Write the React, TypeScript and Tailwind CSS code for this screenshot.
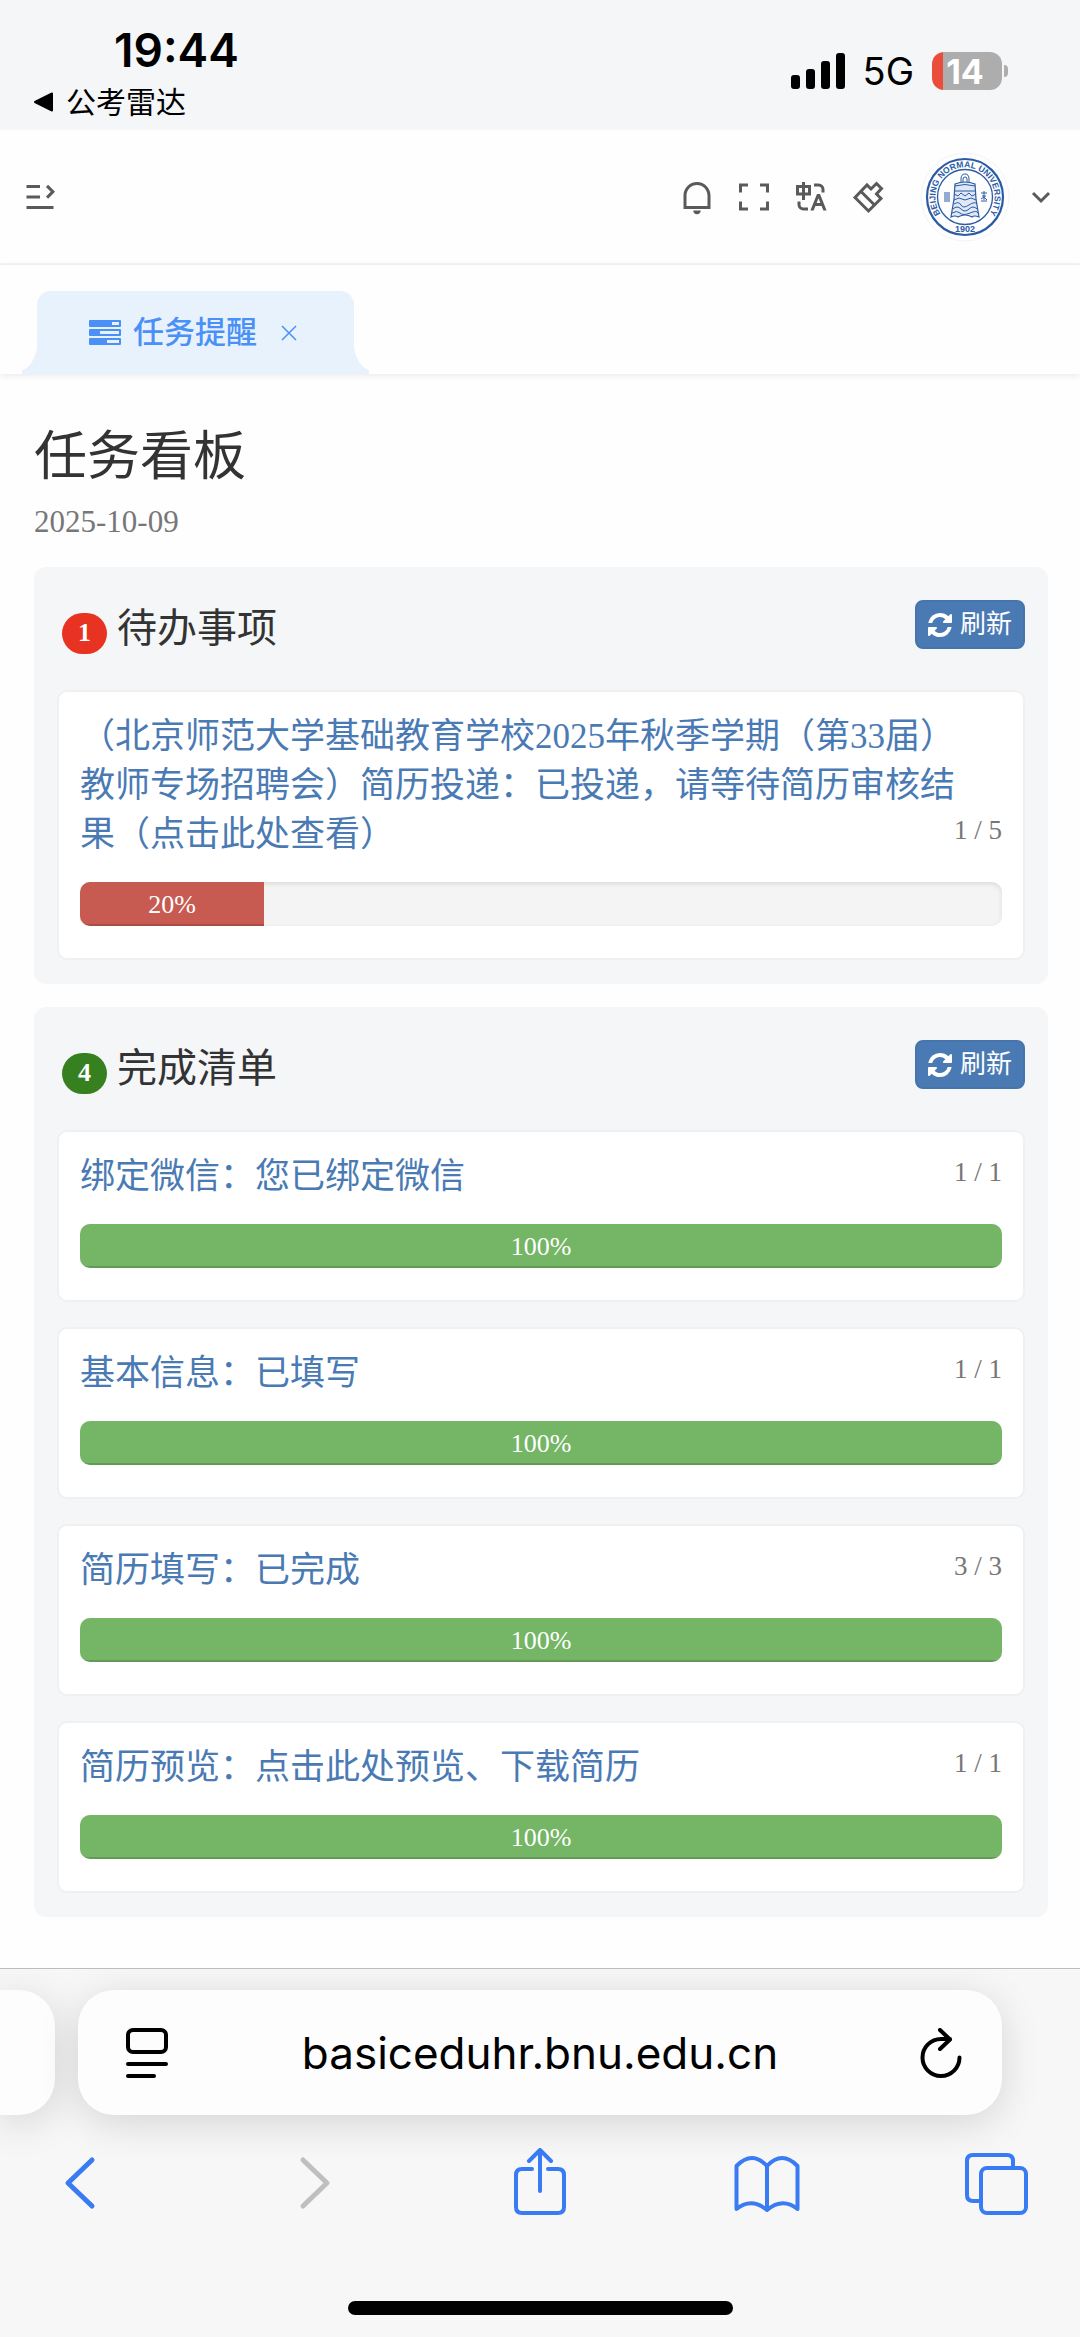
import { useState } from 'react';
import { RiMenuUnfoldLine, RiNotificationLine, RiFullscreenLine } from 'react-icons/ri';

interface Task {
    title: string;
    done: number;
    total: number;
}

interface Board {
    name: string;
    badgeColor: string;
    tasks: Task[];
}

const boards: Board[] = [
    {
        name: '待办事项',
        badgeColor: 'bg-[#e83323]',
        tasks: [
            {
                title: '（北京师范大学基础教育学校2025年秋季学期（第33届）教师专场招聘会）简历投递：已投递，请等待简历审核结果（点击此处查看）',
                done: 1,
                total: 5,
            },
        ],
    },
    {
        name: '完成清单',
        badgeColor: 'bg-[#37801f]',
        tasks: [
            { title: '绑定微信：您已绑定微信', done: 1, total: 1 },
            { title: '基本信息：已填写', done: 1, total: 1 },
            { title: '简历填写：已完成', done: 3, total: 3 },
            { title: '简历预览：点击此处预览、下载简历', done: 1, total: 1 },
        ],
    },
];

const RefreshIcon = () => (
    <svg viewBox="0 0 1792 1792" className="w-7 h-7 -ml-0.5" fill="currentColor" aria-hidden="true">
        <path d="M1639 1056q0 5-1 7-64 268-268 434.5t-478 166.5q-146 0-282.5-55t-243.5-157l-129 129q-19 19-45 19t-45-19-19-45v-448q0-26 19-45t45-19h448q26 0 45 19t19 45-19 45l-137 137q71 66 161 102t187 36q134 0 250-65t186-179q11-17 53-117 8-23 30-23h192q13 0 22.5 9.5t9.5 22.5zm25-800v448q0 26-19 45t-45 19h-448q-26 0-45-19t-19-45 19-45l138-138q-148-137-349-137-134 0-250 65t-186 179q-11 17-53 117-8 23-30 23h-199q-13 0-22.5-9.5t-9.5-22.5v-7q65-268 270-434.5t480-166.5q146 0 284 55.5t245 156.5l130-129q19-19 45-19t45 19 19 45z" />
    </svg>
);

const LanguageIcon = () => (
    <svg viewBox="0 0 24 24" className="w-9 h-9" fill="currentColor" aria-hidden="true">
        <path d="M5 15v2a2 2 0 0 0 1.850 1.995L7 19h3v2H7a4 4 0 0 1-4-4v-2h2zm13-5 4.400 11h-2.155l-1.201-3h-4.090l-1.199 3h-2.154L16 10h2zm-1 2.885L15.753 16h2.492L17 12.885zM8 2v2h4v7H8v3H6v-3H2V4h4V2h2zm9 1a4 4 0 0 1 4 4v2h-2V7a2 2 0 0 0-2-2h-3V3h3zM6 6H4v3h2V6zm4 0H8v3h2V6z" />
    </svg>
);

const BrushIcon = () => (
    <svg viewBox="0 0 36 36" className="w-9 h-9" fill="none" stroke="currentColor" strokeWidth="3" aria-hidden="true">
        <path d="M5 18.500 17 6 21 10 26.500 4.500 31.500 9.500 26.500 15 31 19.500 18.500 32Z" />
        <path d="M11 12.500 24.500 26" />
    </svg>
);

const TasksIcon = () => (
    <svg viewBox="0 0 32 26" className="w-8 h-[26px]" fill="currentColor" aria-hidden="true">
        <path fillRule="evenodd" d="M1 0h30q1 0 1 1v5q0 1-1 1H1q-1 0-1-1V1q0-1 1-1zm22 2v3h7V2z" />
        <path fillRule="evenodd" d="M1 9h30q1 0 1 1v5q0 1-1 1H1q-1 0-1-1v-5q0-1 1-1zm10 2v3h19v-3z" />
        <path fillRule="evenodd" d="M1 18h30q1 0 1 1v5q0 1-1 1H1q-1 0-1-1v-5q0-1 1-1zm17 2v3h12v-3z" />
    </svg>
);

const SchoolCrest = () => (
    <svg viewBox="0 0 90 90" className="w-[90px] h-[90px]" fill="none" stroke="#2c5ba6" role="img" aria-label="Beijing Normal University">
        <defs>
            <path id="crest-arc" d="M24.100 65.900A29.600 29.600 0 1 1 65.900 65.900" />
        </defs>
        <circle cx="45" cy="45" r="44" stroke="#f2f4f7" />
        <circle cx="45" cy="45" r="38" strokeWidth="2.200" />
        <circle cx="45" cy="45" r="27.500" strokeWidth="1.300" />
        <text fill="#2c5ba6" stroke="none" fontSize="8.600" fontWeight="700" fontFamily="Liberation Sans, sans-serif">
            <textPath href="#crest-arc" startOffset="50%" textAnchor="middle">BEIJING NORMAL UNIVERSITY</textPath>
        </text>
        <text x="45" y="80" textAnchor="middle" fill="#2c5ba6" stroke="none" fontSize="9" fontWeight="700" fontFamily="Liberation Sans, sans-serif">1902</text>
        <path d="M41 31v-4q0-5 4-5t4 5v4M43 31v-4q0-2 2-2t2 2v4" strokeWidth="1" />
        <path d="M35 32q10-4 20 0l1 15 3 18q-5-2-7 0-7-4-14 0-3-2-7 0l3-18z" fill="#dfe8f4" strokeWidth="1.200" />
        <path d="M35 34q10-3 20 0M35 39h20M34 42l4 2 3-3 4 3 4-3 3 3 4-2M34 48l5-2 6 2 6-2 5 2M34 52q5-3 7 1t8 0 8-1M33 57q4-4 8 0t8 0 8 0M32 61q5-3 8 0t10 0 8 0" strokeWidth="1" />
        <path d="M25 40v10M27 40v10M29 40v10M61 41h6M64 39v11M62 44h4M61 47l3-2 3 3M62 50v-2M66 50v-2" strokeWidth="1" />
    </svg>
);

function StatusBar() {
    return (
        <div className="flex h-[130px] justify-between bg-[#f5f6f8] pl-[34px] pr-[72px] text-black">
            <div className="pt-5">
                <div className="pl-20 text-[46px] leading-[60px] font-semibold">19:44</div>
                <a href="#" className="flex items-center gap-3 text-[30px] leading-[44px]">
                    <svg viewBox="0 0 20 20" className="w-5 h-5" aria-hidden="true">
                        <path d="M18 1.500v17L1 10z" fill="black" stroke="black" strokeWidth="2" strokeLinejoin="round" />
                    </svg>
                    公考雷达
                </a>
            </div>
            <div className="flex items-center pt-3">
                <svg viewBox="0 0 54 36" className="w-[54px] h-9" aria-label="signal">
                    <rect x="0" y="22" width="9" height="14" rx="3" />
                    <rect x="15" y="16" width="9" height="20" rx="3" />
                    <rect x="30" y="8" width="9" height="28" rx="3" />
                    <rect x="45" y="0" width="9" height="36" rx="3" />
                </svg>
                <span className="ml-[18px] mr-[18px] text-[38px]">5G</span>
                <div className="flex h-[38px] w-[70px] items-center justify-center overflow-hidden rounded-[12px] bg-[linear-gradient(to_right,#eb4d3d_11px,#adadad_11px)] pr-1 text-[34px] font-bold text-white">14</div>
                <div className="ml-0.5 h-3 w-1 rounded-r-full bg-[#adadad]" />
            </div>
        </div>
    );
}

function TaskCard({ task }: { task: Task }) {
    const percent = Math.round((task.done / task.total) * 100);
    const finished = percent === 100;

    return (
        <li className="rounded-[10px] border-2 border-[#eff0f1] bg-white px-[21px] pt-5 pb-8">
            <div className="grid">
                <a href="#" className="col-start-1 row-start-1 pr-4 text-[35px] leading-[49px] text-[#4a7ab4]">
                    {task.title}
                </a>
                <span className="col-start-1 row-start-1 mb-2 self-end justify-self-end text-[27px] leading-[41px] text-[#777777]">
                    {task.done} / {task.total}
                </span>
            </div>
            <div className="mt-[23px] h-11 overflow-hidden rounded-[10px] bg-[#f4f4f4] shadow-[inset_0_2px_5px_rgba(0,0,0,0.1)]">
                <div
                    role="progressbar"
                    aria-valuenow={percent}
                    className={`flex h-full items-center justify-center text-[26px] text-white shadow-[inset_0_-2px_0_rgba(0,0,0,0.15)] ${
                        finished ? 'bg-[#74b566]' : 'bg-[#c75b52]'
                    }`}
                    style={{ width: `${percent}%` }}
                >
                    {percent}%
                </div>
            </div>
        </li>
    );
}

function TaskBoard({ board }: { board: Board }) {
    return (
        <section className="rounded-[12px] bg-[#f5f6f8] px-[23px] pb-6">
            <div className="flex h-[123px] items-start justify-between pt-[33px]">
                <h2 className="flex items-center gap-2.5 pl-[5px] text-[40px] leading-[58px] text-[#333333]">
                    <span className={`mt-2 flex h-[41px] w-[45px] items-center justify-center rounded-full text-[26px] font-bold text-white ${board.badgeColor}`}>
                        {board.tasks.length}
                    </span>
                    {board.name}
                </h2>
                <button type="button" className="flex h-[49px] items-center gap-1.5 rounded-lg border-2 border-[#4674ad] bg-[#4a7ab4] px-[11px] text-[26px] text-white">
                    <RefreshIcon />
                    刷新
                </button>
            </div>
            <ul className="flex flex-col gap-[25px]">
                {board.tasks.map((task) => (
                    <TaskCard key={task.title} task={task} />
                ))}
            </ul>
        </section>
    );
}

function BrowserBar() {
    return (
        <footer className="overflow-hidden border-t border-[#bcbcbc] bg-[#f7f7f7] pb-[22px]">
            <div className="flex gap-[23px] pt-[21px] pr-[78px]">
                <div className="w-[55px] rounded-r-[36px] bg-[#fdfdfd] shadow-[0_8px_40px_rgba(0,0,0,0.14)]" />
                <div className="flex h-[125px] flex-1 items-center justify-between rounded-[36px] bg-[#fdfdfd] px-10 text-black shadow-[0_8px_40px_rgba(0,0,0,0.14)]">
                    <button type="button" aria-label="Page menu" className="pl-2">
                        <svg viewBox="0 0 42 50" className="w-[42px] h-[50px]" fill="none" stroke="currentColor" strokeWidth="4" strokeLinecap="round">
                            <rect x="2" y="2" width="38" height="22" rx="5" />
                            <path d="M2 36h38M2 48h26" />
                        </svg>
                    </button>
                    <span className="text-[44px]">basiceduhr.bnu.edu.cn</span>
                    <button type="button" aria-label="Reload" className="pl-2">
                        <svg viewBox="0 0 42 50" className="w-[42px] h-[50px]" fill="none" stroke="currentColor" strokeWidth="4" strokeLinecap="round" strokeLinejoin="round">
                            <path d="M39.500 29.500A18.500 18.500 0 1 1 21 11h9M20 2l10 9.500L20 21" />
                        </svg>
                    </button>
                </div>
            </div>
            <nav className="mt-[33px] flex items-center justify-between pl-[47px] pr-[51px] text-[#387bf2]">
                <button type="button" aria-label="Back">
                    <svg viewBox="0 0 66 68" className="w-[66px] h-[68px]" fill="none" stroke="currentColor" strokeWidth="5" strokeLinecap="round" strokeLinejoin="round">
                        <path d="M45 12 21 35l24 23" />
                    </svg>
                </button>
                <button type="button" aria-label="Forward" disabled className="text-[#bfbfbf]">
                    <svg viewBox="0 0 66 68" className="w-[66px] h-[68px]" fill="none" stroke="currentColor" strokeWidth="5" strokeLinecap="round" strokeLinejoin="round">
                        <path d="M27 12l24 23-24 23" />
                    </svg>
                </button>
                <button type="button" aria-label="Share">
                    <svg viewBox="0 0 66 68" className="w-[66px] h-[68px]" fill="none" stroke="currentColor" strokeWidth="4" strokeLinecap="round" strokeLinejoin="round">
                        <path d="M27 21h-10q-6 0-6 6v32q0 6 6 6h36q6 0 6-6V27q0-6-6-6H43M35 43V3M24 13 35 2l11 11" />
                    </svg>
                </button>
                <button type="button" aria-label="Bookmarks">
                    <svg viewBox="0 0 66 68" className="w-[66px] h-[68px]" fill="none" stroke="currentColor" strokeWidth="4" strokeLinecap="round" strokeLinejoin="round">
                        <path d="M33 18Q18 2 2.500 18v43q15-12 30.500 1 15.500-13 30.500-1V18Q48 2 33 18zv44" />
                    </svg>
                </button>
                <button type="button" aria-label="Tabs">
                    <svg viewBox="0 0 66 68" className="w-[66px] h-[68px]" fill="none" stroke="currentColor" strokeWidth="4" strokeLinejoin="round">
                        <path d="M17 53h-7q-6 0-6-6V13q0-6 6-6h34q6 0 6 6v7" />
                        <rect x="18" y="20" width="45" height="45" rx="6" />
                    </svg>
                </button>
            </nav>
            <div className="mx-auto mt-[85px] h-3.5 w-[385px] rounded-full bg-black" />
        </footer>
    );
}

export default function App() {
    const [tabOpen, setTabOpen] = useState(true);

    return (
        <div lang="zh-CN" className="flex min-h-screen flex-col bg-[#fefefe] font-['Inter','Noto_Sans_CJK_SC',sans-serif]">
            <StatusBar />
            <header className="flex h-[135px] items-center justify-between border-b-2 border-[#f3f4f5] pl-[22px] pr-[26px] text-[#5a5a5a]">
                <button type="button" aria-label="Menu">
                    <RiMenuUnfoldLine className="w-9 h-9" />
                </button>
                <div className="flex items-center">
                    <div className="flex gap-[21px]">
                        <button type="button" aria-label="Notifications"><RiNotificationLine className="w-9 h-9" /></button>
                        <button type="button" aria-label="Fullscreen"><RiFullscreenLine className="w-9 h-9" /></button>
                        <button type="button" aria-label="Language"><LanguageIcon /></button>
                        <button type="button" aria-label="Theme"><BrushIcon /></button>
                    </div>
                    <button type="button" aria-label="Account" className="ml-[34px] flex items-center gap-[18px]">
                        <SchoolCrest />
                        <svg viewBox="0 0 26 26" className="w-[26px] h-[26px]" fill="none" stroke="currentColor" strokeWidth="3">
                            <path d="M5 9l8 8 8-8" />
                        </svg>
                    </button>
                </div>
            </header>
            <div className="flex h-[109px] items-end pl-[37px] shadow-[0_2px_6px_rgba(0,0,0,0.08)]">
                {tabOpen && (
                    <div className="relative flex h-[83px] items-center rounded-t-[14px] bg-[#e8f2fd] pl-[52px] pr-[57px] text-[#4a90f7]">
                        <svg viewBox="0 0 16 32" className="absolute -left-[15px] bottom-0 w-4 h-8" fill="#e8f2fd" aria-hidden="true">
                            <path d="M16 0Q13 24 0 28v4h16z" />
                        </svg>
                        <svg viewBox="0 0 16 32" className="absolute -right-[15px] bottom-0 w-4 h-8" fill="#e8f2fd" aria-hidden="true">
                            <path d="M0 0q3 24 16 28v4H0z" />
                        </svg>
                        <a href="#" className="flex items-center gap-3 text-[31px] font-medium">
                            <TasksIcon />
                            任务提醒
                        </a>
                        <button type="button" aria-label="Close tab" className="ml-6" onClick={() => setTabOpen(false)}>
                            <svg viewBox="0 0 16 16" className="w-4 h-4" stroke="currentColor" strokeWidth="1.500">
                                <path d="M1 1l14 14M15 1L1 15" />
                            </svg>
                        </button>
                    </div>
                )}
            </div>
            <main className="flex-1 pl-[34px] pr-8 pt-[46px] pb-[47px] font-['Liberation_Serif','Noto_Sans_CJK_SC',serif]">
                <h1 className="text-[53px] leading-[74px] text-[#333333]">任务看板</h1>
                <p className="mt-1.5 mb-[23px] text-[31px] leading-[44px] text-[#777777]">2025-10-09</p>
                <div className="flex flex-col gap-[23px]">
                    {boards.map((board) => (
                        <TaskBoard key={board.name} board={board} />
                    ))}
                </div>
            </main>
            <BrowserBar />
        </div>
    );
}
